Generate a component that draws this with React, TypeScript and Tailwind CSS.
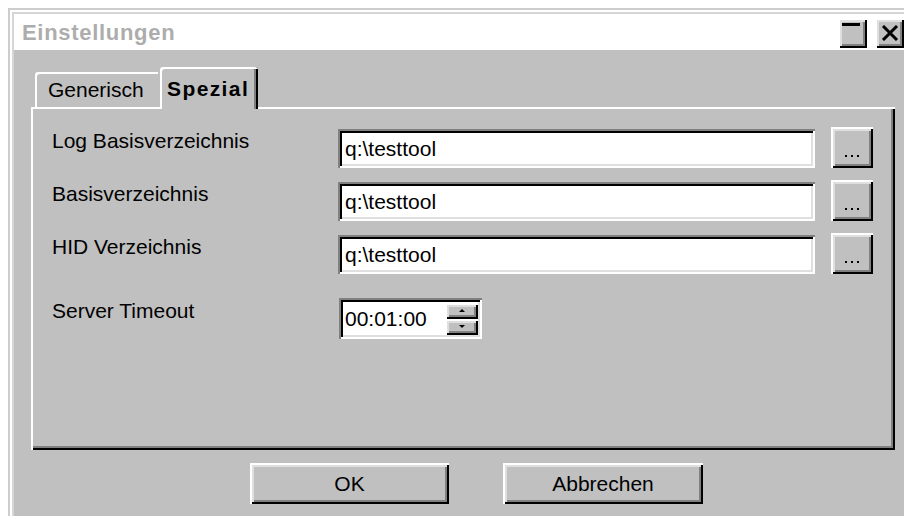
import React from 'react';

// Win95 style bevels
const raised =
  'bg-[#c0c0c0] shadow-[inset_2px_2px_0_#fff,inset_-2px_-2px_0_#000,inset_4px_4px_0_#dfdfdf,inset_-4px_-4px_0_#808080]';
const sunken =
  'bg-white shadow-[inset_2px_2px_0_#808080,inset_-2px_-2px_0_#fff,inset_4px_4px_0_#000,inset_-4px_-4px_0_#dfdfdf]';

function PathRow({ label, value }: { label: string; value: string }) {
  return (
    <div className="flex items-end h-[41px]">
      <div className="w-[286px] self-start mt-[2px] leading-[24px]">{label}</div>
      <div className={`${sunken} w-[477px] h-[39px] flex items-center pl-[7px] leading-[24px]`}>
        {value}
      </div>
      <button
        className={`${raised} ml-[16px] w-[42px] h-[41px] flex items-end justify-center gap-[4px] pb-[11px]`}
      >
        <span className="w-[2px] h-[2px] bg-black" />
        <span className="w-[2px] h-[2px] bg-black" />
        <span className="w-[2px] h-[2px] bg-black" />
      </button>
    </div>
  );
}

function TimeSpinner({ value }: { value: string }) {
  return (
    <div className={`${sunken} w-[143px] h-[41px] flex items-center pl-[6px] pr-[4px]`}>
      <span className="flex-1 leading-[24px]">{value}</span>
      <div className="flex flex-col">
        <button className={`${raised} w-[33px] h-[16px] flex items-center justify-center`}>
          <span className="w-0 h-0 border-l-[3px] border-r-[3px] border-b-[3px] border-l-transparent border-r-transparent border-b-black" />
        </button>
        <button className={`${raised} w-[33px] h-[16px] flex items-center justify-center`}>
          <span className="w-0 h-0 border-l-[3px] border-r-[3px] border-t-[3px] border-l-transparent border-r-transparent border-t-black" />
        </button>
      </div>
    </div>
  );
}

export default function App() {
  return (
    <div className="w-[904px] h-[516px] overflow-hidden bg-white pt-[8px] pl-[8px] font-['Liberation_Sans',Arial,sans-serif] text-[21px] text-black">
      <div className="w-[904px] h-[520px] border-l-2 border-t-2 border-[#cdcdcd] bg-white pl-[2px] pt-[2px]">
        <div className="h-full border-l-2 border-t-2 border-[#d6d6d6] flex flex-col">
          {/* Titelleiste */}
          <div className="h-[36px] bg-white flex items-start shrink-0">
            <span className="ml-[8px] mt-[7px] font-bold text-[22px] leading-[24px] tracking-[0.7px] text-[#adadad]">
              Einstellungen
            </span>
            <div className="ml-auto mr-[8px] mt-[4px] flex gap-[8px]">
              <button className={`${raised} w-[29px] h-[30px] flex items-start pl-[4px] pt-[5px]`}>
                <span className="w-[18px] h-[3px] bg-black" />
              </button>
              <button className={`${raised} w-[29px] h-[30px] flex items-center justify-center`}>
                <svg width="18" height="16" viewBox="0 0 18 16">
                  <path d="M2 1 L16 15 M16 1 L2 15" stroke="#000" strokeWidth="3" />
                </svg>
              </button>
            </div>
          </div>

          {/* Dialoginhalt */}
          <div className="flex-1 bg-[#c0c0c0] flex flex-col">
            {/* Reiter */}
            <div className="flex items-end pl-[21px] pt-[17px]">
              <div className="w-[123px] h-[35px] rounded-tl-[3px] shadow-[inset_2px_2px_0_#fff] pl-[13px] pt-[6px] leading-[24px]">
                Generisch
              </div>
              <div className="relative z-10 ml-[2px] -mb-[2px] w-[98px] h-[42px] rounded-t-[3px] bg-[#c0c0c0] shadow-[inset_2px_2px_0_#fff,inset_-2px_0_0_#000,inset_-4px_0_0_#808080] pl-[7px] pt-[10px] font-bold tracking-[1.4px] leading-[24px]">
                Spezial
              </div>
            </div>

            {/* Reiterinhalt */}
            <div className="ml-[17px] w-[864px] h-[343px] shrink-0 bg-[#c0c0c0] shadow-[inset_2px_2px_0_#fff,inset_-2px_-2px_0_#000,inset_-4px_-4px_0_#808080] pl-[21px] pt-[20px]">
              <div className="flex flex-col gap-[12px]">
                <PathRow label="Log Basisverzeichnis" value="q:\testtool" />
                <PathRow label="Basisverzeichnis" value="q:\testtool" />
                <PathRow label="HID Verzeichnis" value="q:\testtool" />
              </div>
              <div className="flex items-start mt-[24px]">
                <div className="w-[287px] mt-[1px] leading-[24px]">Server Timeout</div>
                <TimeSpinner value="00:01:00" />
              </div>
            </div>

            {/* Schaltflächen */}
            <div className="flex mt-[13px] pl-[236px] gap-[54px]">
              <button className={`${raised} w-[199px] h-[41px] flex items-center justify-center leading-[24px]`}>
                OK
              </button>
              <button className={`${raised} w-[200px] h-[41px] flex items-center justify-center leading-[24px]`}>
                Abbrechen
              </button>
            </div>
          </div>
        </div>
      </div>
    </div>
  );
}
